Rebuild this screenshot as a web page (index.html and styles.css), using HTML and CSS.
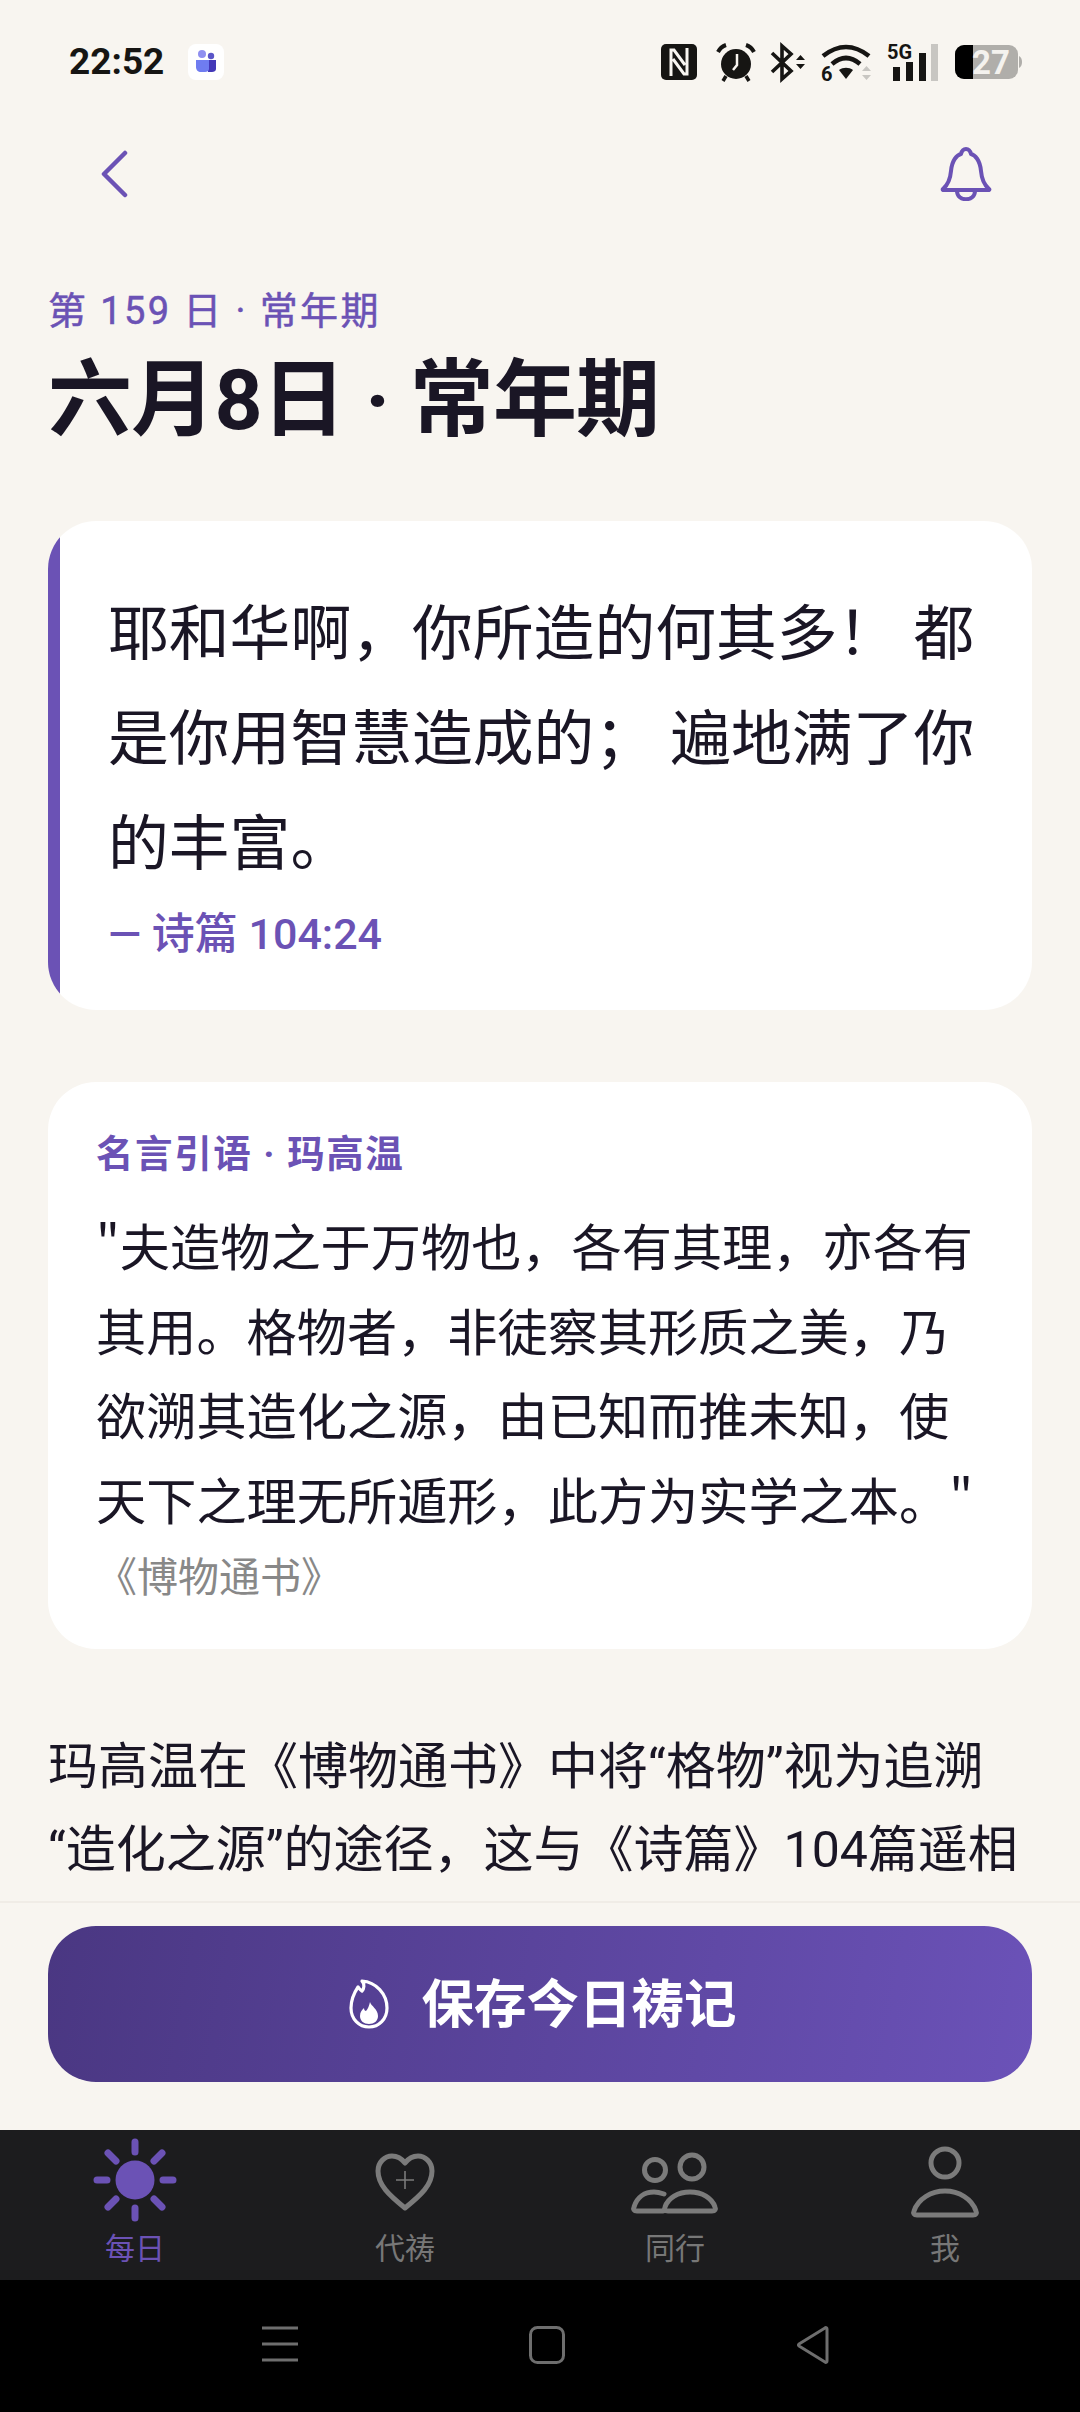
FILE: index.html
```html
<!DOCTYPE html>
<html lang="zh-CN">
<head>
<meta charset="utf-8">
<title>每日</title>
<link rel="stylesheet" href="styles.css">
</head>
<body>
<div class="app">
  <div class="status">
    <div class="status-left">
      <span class="time">22:52</span>
      <svg class="app-icon" width="36" height="36" viewBox="0 0 36 36"><rect width="36" height="36" rx="8" fill="#fff"/><circle cx="14" cy="10" r="4" fill="#8f8ff0"/><circle cx="23" cy="12" r="3.200" fill="#5a55c8"/><path d="M20 16h8v9c0 2-2 3-4 3h-4z" fill="#4338b8"/><path d="M8 16h13v9c0 2-2 3-4 3h-4c-3 0-5-2-5-5z" fill="#6f7cf0"/></svg>
    </div>
    <div class="status-right">
      <svg class="si-nfc" width="36" height="36" viewBox="0 0 36 36"><rect width="36" height="36" rx="5" fill="#161513"/><path d="M10 32V6h3l11 15M26 4v26h-3L12 15" fill="none" stroke="#f8f5f0" stroke-width="3"/></svg>
      <svg class="si-alarm" width="38" height="38" viewBox="0 0 38 38"><circle cx="19" cy="21" r="15" fill="#161513"/><path d="M1 9c2-4 5-6 8-7M37 9c-2-4-5-6-8-7" fill="none" stroke="#161513" stroke-width="4"/><path d="M9 33l-3 5M29 33l3 5" stroke="#161513" stroke-width="3.500"/><path d="M20 11v11l-4 5" fill="none" stroke="#f8f5f0" stroke-width="2.500"/></svg>
      <svg width="34" height="37" viewBox="0 0 34 37"><path d="M1 9l19 18-9 8V2l9 8L1 28" fill="none" stroke="#161513" stroke-width="3.600"/><path d="M25 16l4.500-5 4.500 5zM25 20l4.500 5 4.500-5z" fill="#161513"/></svg>
      <svg class="si-wifi" width="50" height="37" viewBox="0 0 50 37"><path d="M2 12Q25-6 48 12M11 20Q25 8 39 20" fill="none" stroke="#161513" stroke-width="4.600"/><path d="M18 26c4-3 10-3 14 0l-7 9z" fill="#161513"/><path d="M41 27l4.500-5 4.500 5zM41 31l4.500 5 4.500-5z" fill="#c8c6c2"/><text x="0" y="37" class="si-text">6</text></svg>
      <svg class="si-signal" width="52" height="37" viewBox="0 0 52 37"><text x="0" y="15" class="si-text">5G</text><rect x="6" y="23" width="7" height="14" fill="#161513"/><rect x="19" y="18" width="7" height="19" fill="#161513"/><rect x="32" y="9" width="7" height="28" fill="#161513"/><rect x="44" y="0" width="7" height="37" fill="#c8c6c2"/></svg>
      <svg class="si-batt" width="67" height="34" viewBox="0 0 67 34"><rect x="0" y="0" width="63" height="34" rx="9" fill="#b0aeaa"/><path d="M9 0h9v34H9a9 9 0 0 1-9-9V9a9 9 0 0 1 9-9z" fill="#000"/><path d="M64 11c2 1 3 3 3 6s-1 5-3 6z" fill="#b0aeaa"/><text x="17" y="29" class="batt-text">27</text></svg>
    </div>
  </div>

  <header class="topbar">
    <svg class="back" width="28" height="48" viewBox="0 0 28 48"><path d="M25 3L4 24l21 21" fill="none" stroke="#6b52b5" stroke-width="4.500" stroke-linecap="round" stroke-linejoin="round"/></svg>
    <svg class="bell" width="52" height="54" viewBox="0 0 52 54"><path d="M3 42Q10 36 11 24C12 13 17 8 21 7 22 3 24 2 26 2S30 3 31 7C35 8 40 13 41 24Q42 36 49 42 50 43 48 43H4Q2 43 3 42z" fill="none" stroke="#6b52b5" stroke-width="4" stroke-linejoin="round"/><path d="M17 44C17 55 35 55 35 44" fill="none" stroke="#6b52b5" stroke-width="4"/></svg>
  </header>

  <main class="content">
    <p class="kicker">第 159 日 · 常年期</p>
    <h1 class="title">六月8日 · 常年期</h1>

    <section class="verse">
      <p class="verse-text">耶和华啊，你所造的何其多！ 都是你用智慧造成的； 遍地满了你的丰富。</p>
      <p class="verse-ref">— 诗篇 104:24</p>
    </section>

    <section class="quote">
      <p class="quote-label">名言引语 · 玛高温</p>
      <p class="quote-text">"夫造物之于万物也，各有其理，亦各有其用。格物者，非徒察其形质之美，乃欲溯其造化之源，由已知而推未知，使天下之理无所遁形，此方为实学之本。"</p>
      <p class="quote-source">《博物通书》</p>
    </section>

    <p class="reflection">玛高温在《博物通书》中将“格物”视为追溯“造化之源”的途径，这与《诗篇》104篇遥相</p>
  </main>

  <div class="action">
    <button class="save">
      <svg width="40" height="50" viewBox="0 0 40 50"><path d="M13 2c3 3 2 8 0 10-2-1-3-3-4-4C5 14 2 20 2 29c0 11 8 19 18 19s18-8 18-19C38 15 27 3 13 2z" fill="none" stroke="#fff" stroke-width="3.200" stroke-linejoin="round"/><path d="M21 23c1 4 8 7 8 14 0 5-4 8-9 8s-9-3-9-8c0-4 2-6 4-8 0 2 1 3 2 3 2-2 3-5 4-9z" fill="#fff"/></svg>
      <span>保存今日祷记</span>
    </button>
  </div>

  <nav class="tabs">
    <div class="tab tab-active">
      <svg width="84" height="84" viewBox="0 0 84 84"><circle cx="42" cy="42" r="19.500" fill="#6b52b5"/><g stroke="#6b52b5" stroke-width="7" stroke-linecap="round"><path d="M42 4v10M42 70v10M4 42h10M70 42h10M15 15l8 8M61 61l8 8M69 15l-8 8M23 61l-8 8"/></g></svg>
      <span>每日</span>
    </div>
    <div class="tab">
      <svg width="84" height="84" viewBox="0 0 84 84"><path d="M42 70C26 57 15 47 15 33c0-9 7-15 14-15 6 0 10 3 13 7 3-4 7-7 13-7 7 0 14 6 14 15 0 14-11 24-27 37z" fill="none" stroke="#7b7b7b" stroke-width="5" stroke-linejoin="round"/><path d="M33 42h18M42 33v18" stroke="#7b7b7b" stroke-width="1.600"/></svg>
      <span>代祷</span>
    </div>
    <div class="tab">
      <svg width="92" height="84" viewBox="0 0 92 84"><circle cx="26" cy="32" r="10.500" fill="none" stroke="#7b7b7b" stroke-width="5"/><circle cx="63" cy="29" r="12" fill="none" stroke="#7b7b7b" stroke-width="5"/><path d="M34 73H8c-3 0-4-2-3-4 3-10 11-15 20-15 4 0 7 1 10 2" fill="none" stroke="#7b7b7b" stroke-width="5" stroke-linecap="round"/><path d="M39 73c-3 0-4-2-3-4 3-9 13-15 25-15s22 6 25 15c1 2 0 4-3 4z" fill="none" stroke="#7b7b7b" stroke-width="5" stroke-linejoin="round"/></svg>
      <span>同行</span>
    </div>
    <div class="tab">
      <svg width="84" height="84" viewBox="0 0 84 84"><circle cx="42" cy="25" r="14" fill="none" stroke="#7b7b7b" stroke-width="5"/><path d="M14 77c-3 0-4-2-3-4 4-12 17-20 31-20s27 8 31 20c1 2 0 4-3 4z" fill="none" stroke="#7b7b7b" stroke-width="5" stroke-linejoin="round"/></svg>
      <span>我</span>
    </div>
  </nav>

  <div class="sysnav">
    <svg width="36" height="36" viewBox="0 0 36 36"><path d="M0 2h36M0 18h36M0 34h36" stroke="#6e6e6e" stroke-width="3"/></svg>
    <svg width="36" height="38" viewBox="0 0 36 38"><rect x="1.500" y="1.500" width="33" height="35" rx="7" fill="none" stroke="#6e6e6e" stroke-width="3"/></svg>
    <svg width="34" height="38" viewBox="0 0 34 38"><path d="M31 3v32c0 1-1 2-2 1L3 20c-1-1-1-1 0-2L29 2c1-1 2 0 2 1z" fill="none" stroke="#6e6e6e" stroke-width="3" stroke-linejoin="round"/></svg>
  </div>
</div>
</body>
</html>
```

FILE: styles.css
```css
* { box-sizing: border-box; margin: 0; padding: 0; }
html, body { height: 100%; }
body {
  background: #f8f5f0;
  font-family: Roboto, "Noto Sans CJK SC", sans-serif;
  color: #1a1625;
}
.app {
  width: 1080px;
  height: 2412px;
  display: flex;
  flex-direction: column;
  overflow: hidden;
}

/* status bar */
.status {
  height: 126px;
  padding: 43px 58px 0 69px;
  display: flex;
  justify-content: space-between;
  align-items: flex-start;
  flex-shrink: 0;
}
.status-left { display: flex; align-items: center; gap: 24px; margin-top: 1px; }
.time { font-size: 37px; font-weight: 700; line-height: 36px; color: #161513; }
.status-right { display: flex; align-items: center; gap: 16px; }
.status-right svg { overflow: visible; }
.si-alarm { margin-left: 4px; }
.si-text { font: 700 20px Roboto, sans-serif; fill: #161513; }
.batt-text { font: 700 33px Roboto, sans-serif; fill: #f4f2ee; }

/* top bar */
.topbar {
  height: 96px;
  padding: 0 88px 0 100px;
  display: flex;
  justify-content: space-between;
  align-items: center;
  flex-shrink: 0;
}

/* main */
.content {
  flex: 1;
  min-height: 0;
  overflow: hidden;
  padding: 67px 48px 0;
}
.kicker {
  font-size: 38px;
  line-height: 44px;
  font-weight: 400;
  -webkit-text-stroke: 0.5px #6b52b5;
  letter-spacing: 2.4px;
  color: #6b52b5;
}
.title {
  font-size: 84px;
  line-height: 100px;
  font-weight: 700;
  letter-spacing: -0.8px;
  color: #1a1625;
  margin-top: 18px;
}
.verse {
  margin-top: 70px;
  background: linear-gradient(to right, #6b52b5 12px, #fff 12px);
  border-radius: 48px;
  padding: 61px 48px 48px 60px;
}
.verse-text { font-size: 60.8px; line-height: 105px; color: #1a1625; }
.verse-ref { font-size: 43px; line-height: 56px; font-weight: 500; color: #6b52b5; margin-top: 9px; }

.quote {
  margin-top: 72px;
  background: #fff;
  border-radius: 48px;
  padding: 48px 48px 43px;
}
.quote-label { font-size: 37.5px; line-height: 48px; font-weight: 700; letter-spacing: 1.6px; color: #6b52b5; }
.quote-text { font-family: "Noto Sans CJK SC", sans-serif; font-size: 50.2px; line-height: 84.6px; color: #1a1625; margin-top: 24px; }
.quote-source { font-size: 41px; line-height: 56px; color: #888; margin-top: 9.6px; }

.reflection { font-size: 50px; line-height: 83px; margin-top: 77px; color: #1a1625; }

/* save action */
.action {
  height: 229px;
  padding: 23px 48px 0;
  border-top: 2px solid #f0ece6;
  flex-shrink: 0;
}
.save {
  width: 100%;
  height: 156px;
  padding-left: 6px;
  border: 0;
  border-radius: 48px;
  background: linear-gradient(100deg, #4a3782, #6b52b8);
  color: #fff;
  font-family: inherit;
  font-size: 52.5px;
  font-weight: 700;
  display: flex;
  align-items: center;
  justify-content: center;
  gap: 32px;
}
.save span { margin-bottom: 8px; }

/* tabs */
.tabs {
  height: 150px;
  background: #1c1c1e;
  display: grid;
  grid-template-columns: repeat(4, 1fr);
  flex-shrink: 0;
}
.tab {
  display: flex;
  flex-direction: column;
  align-items: center;
  color: #777;
  font-size: 30px;
  line-height: 36px;
  padding-top: 8px;
}
.tab svg { display: block; }
.tab span { margin-top: 9px; }
.tab-active { color: #6b52b5; }

/* system nav */
.sysnav {
  height: 132px;
  flex-shrink: 0;
  background: #000;
  padding: 46px 250px 0 262px;
  display: flex;
  justify-content: space-between;
  align-items: flex-start;
}
```
